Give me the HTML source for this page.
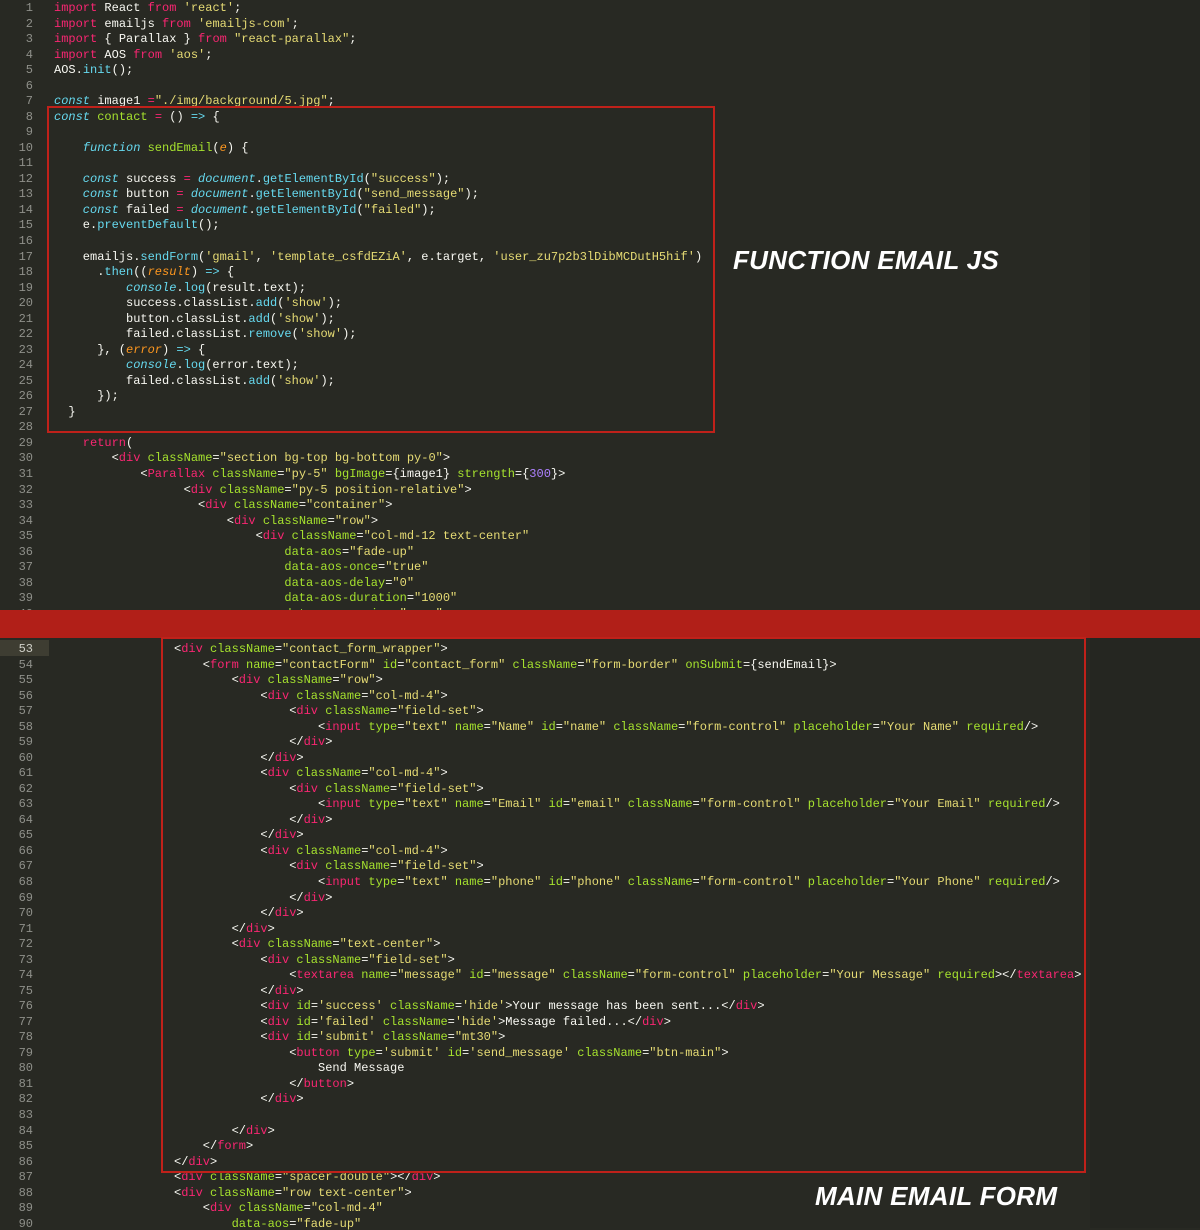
<!DOCTYPE html>
<html><head><meta charset="utf-8"><style>
html,body{margin:0;padding:0;}
body{width:1200px;height:1228px;background:#282923;position:relative;overflow:hidden;font-family:"Liberation Mono",monospace;font-size:12px;color:#f8f8f2;}
.mm{position:absolute;left:1090px;top:0;width:110px;height:1228px;background:#252621;}
.wrap{position:absolute;left:0;top:2px;width:1200px;height:1228px;overflow:hidden;}
.l{position:absolute;left:0;height:15.5px;line-height:15.5px;width:1090px;white-space:pre;}
.l i{position:absolute;right:1057px;font-style:normal;color:#8f908a;}
.l b{position:absolute;font-weight:normal;}
.k{color:#f92672}.s{color:#e6db74}.g{color:#a6e22e}.c{color:#66d9ef}.ci{color:#66d9ef;font-style:italic}.o{color:#fd971f;font-style:italic}.n{color:#ae81ff}
.band{position:absolute;left:0;top:610px;width:1200px;height:28px;background:#b11f18;}
.box{position:absolute;border:2px solid #c0211a;box-sizing:border-box;}
.lab{position:absolute;font-family:"Liberation Sans",sans-serif;font-weight:bold;font-style:italic;font-size:26px;color:#fff;letter-spacing:0.3px;}
.hl{position:absolute;left:0;top:640px;width:49px;height:16px;background:#3e3d32;}
</style></head><body>
<div class="mm"></div>
<div class="hl"></div>
<div class="wrap">
<div class="l" style="top:-1px"><i>1</i><b style="left:54px"><span class="k">import</span> React <span class="k">from</span> <span class="s">'react'</span>;</b></div>
<div class="l" style="top:14.5px"><i>2</i><b style="left:54px"><span class="k">import</span> emailjs <span class="k">from</span> <span class="s">'emailjs-com'</span>;</b></div>
<div class="l" style="top:30px"><i>3</i><b style="left:54px"><span class="k">import</span> { Parallax } <span class="k">from</span> <span class="s">"react-parallax"</span>;</b></div>
<div class="l" style="top:45.6px"><i>4</i><b style="left:54px"><span class="k">import</span> AOS <span class="k">from</span> <span class="s">'aos'</span>;</b></div>
<div class="l" style="top:61.1px"><i>5</i><b style="left:54px">AOS.<span class="c">init</span>();</b></div>
<div class="l" style="top:76.6px"><i>6</i></div>
<div class="l" style="top:92.2px"><i>7</i><b style="left:54px"><span class="ci">const</span> image1 <span class="k">=</span><span class="s">"./img/background/5.jpg"</span>;</b></div>
<div class="l" style="top:107.7px"><i>8</i><b style="left:54px"><span class="ci">const</span> <span class="g">contact</span> <span class="k">=</span> () <span class="c">=&gt;</span> {</b></div>
<div class="l" style="top:123.2px"><i>9</i></div>
<div class="l" style="top:138.8px"><i>10</i><b style="left:82.8px"><span class="ci">function</span> <span class="g">sendEmail</span>(<span class="o">e</span>) {</b></div>
<div class="l" style="top:154.3px"><i>11</i></div>
<div class="l" style="top:169.8px"><i>12</i><b style="left:82.8px"><span class="ci">const</span> success <span class="k">=</span> <span class="ci">document</span>.<span class="c">getElementById</span>(<span class="s">"success"</span>);</b></div>
<div class="l" style="top:185.4px"><i>13</i><b style="left:82.8px"><span class="ci">const</span> button <span class="k">=</span> <span class="ci">document</span>.<span class="c">getElementById</span>(<span class="s">"send_message"</span>);</b></div>
<div class="l" style="top:200.9px"><i>14</i><b style="left:82.8px"><span class="ci">const</span> failed <span class="k">=</span> <span class="ci">document</span>.<span class="c">getElementById</span>(<span class="s">"failed"</span>);</b></div>
<div class="l" style="top:216.4px"><i>15</i><b style="left:82.8px">e.<span class="c">preventDefault</span>();</b></div>
<div class="l" style="top:232px"><i>16</i></div>
<div class="l" style="top:247.5px"><i>17</i><b style="left:82.8px">emailjs.<span class="c">sendForm</span>(<span class="s">'gmail'</span>, <span class="s">'template_csfdEZiA'</span>, e.target, <span class="s">'user_zu7p2b3lDibMCDutH5hif'</span>)</b></div>
<div class="l" style="top:263px"><i>18</i><b style="left:97.2px">.<span class="c">then</span>((<span class="o">result</span>) <span class="c">=&gt;</span> {</b></div>
<div class="l" style="top:278.6px"><i>19</i><b style="left:126px"><span class="ci">console</span>.<span class="c">log</span>(result.text);</b></div>
<div class="l" style="top:294.1px"><i>20</i><b style="left:126px">success.classList.<span class="c">add</span>(<span class="s">'show'</span>);</b></div>
<div class="l" style="top:309.6px"><i>21</i><b style="left:126px">button.classList.<span class="c">add</span>(<span class="s">'show'</span>);</b></div>
<div class="l" style="top:325.2px"><i>22</i><b style="left:126px">failed.classList.<span class="c">remove</span>(<span class="s">'show'</span>);</b></div>
<div class="l" style="top:340.7px"><i>23</i><b style="left:97.2px">}, (<span class="o">error</span>) <span class="c">=&gt;</span> {</b></div>
<div class="l" style="top:356.2px"><i>24</i><b style="left:126px"><span class="ci">console</span>.<span class="c">log</span>(error.text);</b></div>
<div class="l" style="top:371.8px"><i>25</i><b style="left:126px">failed.classList.<span class="c">add</span>(<span class="s">'show'</span>);</b></div>
<div class="l" style="top:387.3px"><i>26</i><b style="left:97.2px">});</b></div>
<div class="l" style="top:402.8px"><i>27</i><b style="left:68.4px">}</b></div>
<div class="l" style="top:418.4px"><i>28</i></div>
<div class="l" style="top:433.9px"><i>29</i><b style="left:82.8px"><span class="k">return</span>(</b></div>
<div class="l" style="top:449.4px"><i>30</i><b style="left:111.6px">&lt;<span class="k">div</span> <span class="g">className</span>=<span class="s">"section bg-top bg-bottom py-0"</span>&gt;</b></div>
<div class="l" style="top:465px"><i>31</i><b style="left:140.4px">&lt;<span class="k">Parallax</span> <span class="g">className</span>=<span class="s">"py-5"</span> <span class="g">bgImage</span>={image1} <span class="g">strength</span>={<span class="n">300</span>}&gt;</b></div>
<div class="l" style="top:480.5px"><i>32</i><b style="left:183.6px">&lt;<span class="k">div</span> <span class="g">className</span>=<span class="s">"py-5 position-relative"</span>&gt;</b></div>
<div class="l" style="top:496px"><i>33</i><b style="left:198px">&lt;<span class="k">div</span> <span class="g">className</span>=<span class="s">"container"</span>&gt;</b></div>
<div class="l" style="top:511.6px"><i>34</i><b style="left:226.8px">&lt;<span class="k">div</span> <span class="g">className</span>=<span class="s">"row"</span>&gt;</b></div>
<div class="l" style="top:527.1px"><i>35</i><b style="left:255.6px">&lt;<span class="k">div</span> <span class="g">className</span>=<span class="s">"col-md-12 text-center"</span></b></div>
<div class="l" style="top:542.6px"><i>36</i><b style="left:284.4px"><span class="g">data-aos</span>=<span class="s">"fade-up"</span></b></div>
<div class="l" style="top:558.2px"><i>37</i><b style="left:284.4px"><span class="g">data-aos-once</span>=<span class="s">"true"</span></b></div>
<div class="l" style="top:573.7px"><i>38</i><b style="left:284.4px"><span class="g">data-aos-delay</span>=<span class="s">"0"</span></b></div>
<div class="l" style="top:589.2px"><i>39</i><b style="left:284.4px"><span class="g">data-aos-duration</span>=<span class="s">"1000"</span></b></div>
<div class="l" style="top:604.8px"><i>40</i><b style="left:284.4px"><span class="g">data-aos-easing</span>=<span class="s">"ease"</span></b></div>

<div class="l" style="top:640px"><i style="color:#d0d0c8">53</i><b style="left:174px">&lt;<span class="k">div</span> <span class="g">className</span>=<span class="s">"contact_form_wrapper"</span>&gt;</b></div>
<div class="l" style="top:655.5px"><i>54</i><b style="left:202.8px">&lt;<span class="k">form</span> <span class="g">name</span>=<span class="s">"contactForm"</span> <span class="g">id</span>=<span class="s">"contact_form"</span> <span class="g">className</span>=<span class="s">"form-border"</span> <span class="g">onSubmit</span>={sendEmail}&gt;</b></div>
<div class="l" style="top:671px"><i>55</i><b style="left:231.6px">&lt;<span class="k">div</span> <span class="g">className</span>=<span class="s">"row"</span>&gt;</b></div>
<div class="l" style="top:686.6px"><i>56</i><b style="left:260.4px">&lt;<span class="k">div</span> <span class="g">className</span>=<span class="s">"col-md-4"</span>&gt;</b></div>
<div class="l" style="top:702.1px"><i>57</i><b style="left:289.2px">&lt;<span class="k">div</span> <span class="g">className</span>=<span class="s">"field-set"</span>&gt;</b></div>
<div class="l" style="top:717.6px"><i>58</i><b style="left:318px">&lt;<span class="k">input</span> <span class="g">type</span>=<span class="s">"text"</span> <span class="g">name</span>=<span class="s">"Name"</span> <span class="g">id</span>=<span class="s">"name"</span> <span class="g">className</span>=<span class="s">"form-control"</span> <span class="g">placeholder</span>=<span class="s">"Your Name"</span> <span class="g">required</span>/&gt;</b></div>
<div class="l" style="top:733.2px"><i>59</i><b style="left:289.2px">&lt;/<span class="k">div</span>&gt;</b></div>
<div class="l" style="top:748.7px"><i>60</i><b style="left:260.4px">&lt;/<span class="k">div</span>&gt;</b></div>
<div class="l" style="top:764.2px"><i>61</i><b style="left:260.4px">&lt;<span class="k">div</span> <span class="g">className</span>=<span class="s">"col-md-4"</span>&gt;</b></div>
<div class="l" style="top:779.8px"><i>62</i><b style="left:289.2px">&lt;<span class="k">div</span> <span class="g">className</span>=<span class="s">"field-set"</span>&gt;</b></div>
<div class="l" style="top:795.3px"><i>63</i><b style="left:318px">&lt;<span class="k">input</span> <span class="g">type</span>=<span class="s">"text"</span> <span class="g">name</span>=<span class="s">"Email"</span> <span class="g">id</span>=<span class="s">"email"</span> <span class="g">className</span>=<span class="s">"form-control"</span> <span class="g">placeholder</span>=<span class="s">"Your Email"</span> <span class="g">required</span>/&gt;</b></div>
<div class="l" style="top:810.8px"><i>64</i><b style="left:289.2px">&lt;/<span class="k">div</span>&gt;</b></div>
<div class="l" style="top:826.4px"><i>65</i><b style="left:260.4px">&lt;/<span class="k">div</span>&gt;</b></div>
<div class="l" style="top:841.9px"><i>66</i><b style="left:260.4px">&lt;<span class="k">div</span> <span class="g">className</span>=<span class="s">"col-md-4"</span>&gt;</b></div>
<div class="l" style="top:857.4px"><i>67</i><b style="left:289.2px">&lt;<span class="k">div</span> <span class="g">className</span>=<span class="s">"field-set"</span>&gt;</b></div>
<div class="l" style="top:873px"><i>68</i><b style="left:318px">&lt;<span class="k">input</span> <span class="g">type</span>=<span class="s">"text"</span> <span class="g">name</span>=<span class="s">"phone"</span> <span class="g">id</span>=<span class="s">"phone"</span> <span class="g">className</span>=<span class="s">"form-control"</span> <span class="g">placeholder</span>=<span class="s">"Your Phone"</span> <span class="g">required</span>/&gt;</b></div>
<div class="l" style="top:888.5px"><i>69</i><b style="left:289.2px">&lt;/<span class="k">div</span>&gt;</b></div>
<div class="l" style="top:904px"><i>70</i><b style="left:260.4px">&lt;/<span class="k">div</span>&gt;</b></div>
<div class="l" style="top:919.6px"><i>71</i><b style="left:231.6px">&lt;/<span class="k">div</span>&gt;</b></div>
<div class="l" style="top:935.1px"><i>72</i><b style="left:231.6px">&lt;<span class="k">div</span> <span class="g">className</span>=<span class="s">"text-center"</span>&gt;</b></div>
<div class="l" style="top:950.6px"><i>73</i><b style="left:260.4px">&lt;<span class="k">div</span> <span class="g">className</span>=<span class="s">"field-set"</span>&gt;</b></div>
<div class="l" style="top:966.2px"><i>74</i><b style="left:289.2px">&lt;<span class="k">textarea</span> <span class="g">name</span>=<span class="s">"message"</span> <span class="g">id</span>=<span class="s">"message"</span> <span class="g">className</span>=<span class="s">"form-control"</span> <span class="g">placeholder</span>=<span class="s">"Your Message"</span> <span class="g">required</span>&gt;&lt;/<span class="k">textarea</span>&gt;</b></div>
<div class="l" style="top:981.7px"><i>75</i><b style="left:260.4px">&lt;/<span class="k">div</span>&gt;</b></div>
<div class="l" style="top:997.2px"><i>76</i><b style="left:260.4px">&lt;<span class="k">div</span> <span class="g">id</span>=<span class="s">'success'</span> <span class="g">className</span>=<span class="s">'hide'</span>&gt;Your message has been sent...&lt;/<span class="k">div</span>&gt;</b></div>
<div class="l" style="top:1012.8px"><i>77</i><b style="left:260.4px">&lt;<span class="k">div</span> <span class="g">id</span>=<span class="s">'failed'</span> <span class="g">className</span>=<span class="s">'hide'</span>&gt;Message failed...&lt;/<span class="k">div</span>&gt;</b></div>
<div class="l" style="top:1028.3px"><i>78</i><b style="left:260.4px">&lt;<span class="k">div</span> <span class="g">id</span>=<span class="s">'submit'</span> <span class="g">className</span>=<span class="s">"mt30"</span>&gt;</b></div>
<div class="l" style="top:1043.8px"><i>79</i><b style="left:289.2px">&lt;<span class="k">button</span> <span class="g">type</span>=<span class="s">'submit'</span> <span class="g">id</span>=<span class="s">'send_message'</span> <span class="g">className</span>=<span class="s">"btn-main"</span>&gt;</b></div>
<div class="l" style="top:1059.4px"><i>80</i><b style="left:318px">Send Message</b></div>
<div class="l" style="top:1074.9px"><i>81</i><b style="left:289.2px">&lt;/<span class="k">button</span>&gt;</b></div>
<div class="l" style="top:1090.4px"><i>82</i><b style="left:260.4px">&lt;/<span class="k">div</span>&gt;</b></div>
<div class="l" style="top:1106px"><i>83</i></div>
<div class="l" style="top:1121.5px"><i>84</i><b style="left:231.6px">&lt;/<span class="k">div</span>&gt;</b></div>
<div class="l" style="top:1137px"><i>85</i><b style="left:202.8px">&lt;/<span class="k">form</span>&gt;</b></div>
<div class="l" style="top:1152.6px"><i>86</i><b style="left:174px">&lt;/<span class="k">div</span>&gt;</b></div>
<div class="l" style="top:1168.1px"><i>87</i><b style="left:174px">&lt;<span class="k">div</span> <span class="g">className</span>=<span class="s">"spacer-double"</span>&gt;&lt;/<span class="k">div</span>&gt;</b></div>
<div class="l" style="top:1183.6px"><i>88</i><b style="left:174px">&lt;<span class="k">div</span> <span class="g">className</span>=<span class="s">"row text-center"</span>&gt;</b></div>
<div class="l" style="top:1199.2px"><i>89</i><b style="left:202.8px">&lt;<span class="k">div</span> <span class="g">className</span>=<span class="s">"col-md-4"</span></b></div>
<div class="l" style="top:1214.7px"><i>90</i><b style="left:231.6px"><span class="g">data-aos</span>=<span class="s">"fade-up"</span></b></div>
</div>
<div class="band"></div>
<div class="box" style="left:47px;top:106px;width:668px;height:327px"></div>
<div class="box" style="left:161px;top:637px;width:925px;height:536px"></div>
<div class="lab" style="left:733px;top:245px">FUNCTION EMAIL JS</div>
<div class="lab" style="left:815px;top:1181px">MAIN EMAIL FORM</div>
</body></html>
